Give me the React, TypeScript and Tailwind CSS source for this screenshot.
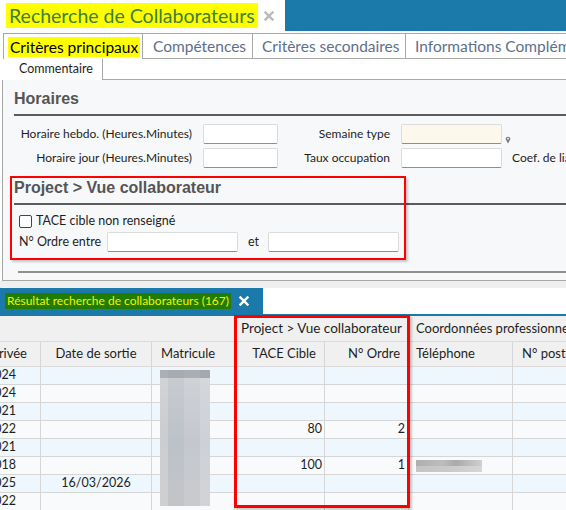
import React from "react";

const rows = [
  { arr: "01/09/2024", sortie: "", tace: "", ordre: "", tel: false },
  { arr: "04/11/2024", sortie: "", tace: "", ordre: "", tel: false },
  { arr: "06/04/2021", sortie: "", tace: "", ordre: "", tel: false },
  { arr: "02/05/2022", sortie: "", tace: "80", ordre: "2", tel: false },
  { arr: "01/02/2021", sortie: "", tace: "", ordre: "", tel: false },
  { arr: "03/09/2018", sortie: "", tace: "100", ordre: "1", tel: true },
  { arr: "06/01/2025", sortie: "16/03/2026", tace: "", ordre: "", tel: false },
  { arr: "07/03/2022", sortie: "", tace: "", ordre: "", tel: false },
];

function CloseIcon({ color, size }: { color: string; size: number }) {
  return (
    <svg width={size} height={size} viewBox="0 0 10 10">
      <path d="M1.5 1.5 L8.5 8.5 M8.5 1.5 L1.5 8.5" stroke={color} strokeWidth="2.4" strokeLinecap="square" />
    </svg>
  );
}

function Input({ w, cream }: { w: string; cream?: boolean }) {
  return (
    <div
      className={`${w} shrink-0 h-[20px] border border-[#dcdcdc] border-b-[#8e8e8e] rounded-[2px] ${
        cream ? "bg-[#fdf8ec]" : "bg-white"
      }`}
    />
  );
}

export default function App() {
  return (
    <div className="relative w-[566px] h-[510px] overflow-hidden bg-white font-['Segoe_UI',Lato,sans-serif] text-[#1e1e1e]">
      {/* Title bar */}
      <div className="flex h-[31px]">
        <div className="w-[285px] shrink-0 flex items-center pl-[6px]">
          <span className="bg-[#ffff00] text-[19.5px] leading-[25px] text-[#3d8033] px-[3px] whitespace-nowrap">
            Recherche de Collaborateurs
          </span>
          <span className="ml-[6px] mt-[1px]">
            <CloseIcon color="#b9b9b9" size={10} />
          </span>
        </div>
        <div className="flex-1 bg-[#1c7aab]" />
      </div>

      {/* Main tabs */}
      <div className="flex h-[28px] pt-[2px] pl-[3px] text-[15.5px] leading-[20px] whitespace-nowrap overflow-hidden">
        <div className="w-[140px] shrink-0 border-t border-l border-r border-[#a8a8a8] flex items-center pl-[4px]">
          <span className="bg-[#ffff00] text-black px-[2px]">Critères principaux</span>
        </div>
        <div className="w-[110px] shrink-0 border-t border-r border-b border-[#a8a8a8] flex items-center pl-[10px] text-[#5d6f8d]">
          Compétences
        </div>
        <div className="w-[153px] shrink-0 border-t border-r border-b border-[#a8a8a8] flex items-center pl-[9px] text-[#5d6f8d]">
          Critères secondaires
        </div>
        <div className="w-[200px] shrink-0 border-t border-b border-[#a8a8a8] flex items-center pl-[9px] text-[#5d6f8d]">
          Informations Complémentaires
        </div>
      </div>

      {/* Sub tabs */}
      <div className="flex h-[21px] pl-[3px]">
        <div className="w-[100px] shrink-0 border-r border-[#a8a8a8] flex items-center pl-[16px] text-[12.5px]">
          Commentaire
        </div>
        <div className="flex-1 border-b border-[#a8a8a8]" />
      </div>

      {/* Criteria panel */}
      <div className="ml-[2px] h-[201px] bg-[#f7f8fa] border-l border-b border-[#a8a8a8] pl-[11px] text-[12px] overflow-hidden">
        <div className="pt-[9px] pb-[5px] border-b-2 border-[#5b5b5b] font-['Liberation_Sans',Arial,sans-serif] font-bold text-[16px] leading-[20px] text-[#555]">
          Horaires
        </div>

        <div className="mt-[8px] flex items-center h-[20px] whitespace-nowrap">
          <div className="w-[178px] shrink-0 text-right">Horaire hebdo. (Heures.Minutes)</div>
          <div className="ml-[11px] shrink-0">
            <Input w="w-[75px]" />
          </div>
          <div className="w-[112px] shrink-0 text-right">Semaine type</div>
          <div className="ml-[11px] shrink-0">
            <Input w="w-[101px]" cream />
          </div>
          <svg className="ml-[3px] mt-[12px] shrink-0" width="6" height="8" viewBox="0 0 6 8">
            <path d="M3 7.5 L0.8 3.6 A2.3 2.3 0 1 1 5.2 3.6 Z" fill="#7a7a7a" />
            <circle cx="3" cy="2.7" r="0.9" fill="#f7f8fa" />
          </svg>
        </div>
        <div className="mt-[4px] flex items-center h-[20px] whitespace-nowrap">
          <div className="w-[178px] shrink-0 text-right">Horaire jour (Heures.Minutes)</div>
          <div className="ml-[11px] shrink-0">
            <Input w="w-[75px]" />
          </div>
          <div className="w-[112px] shrink-0 text-right">Taux occupation</div>
          <div className="ml-[11px] shrink-0">
            <Input w="w-[101px]" />
          </div>
          <div className="ml-[10px] shrink-0">Coef. de liaison</div>
        </div>

        <div className="mt-[10px] pb-[5px] border-b-2 border-[#5b5b5b] font-['Liberation_Sans',Arial,sans-serif] font-bold text-[16px] leading-[20px] text-[#555]">
          Project &gt; Vue collaborateur
        </div>

        <div className="mt-[6px] h-[20px] flex items-center pl-[5px] text-[12.5px]">
          <div className="w-[13px] h-[13px] border border-[#444] rounded-[2px] bg-white" />
          <span className="ml-[4px]">TACE cible non renseigné</span>
        </div>
        <div className="mt-[1px] h-[20px] flex items-center pl-[5px] whitespace-nowrap text-[12.5px]">
          <div className="w-[88px] shrink-0">N° Ordre entre</div>
          <Input w="w-[131px]" />
          <div className="ml-[10px] w-[20px] shrink-0">et</div>
          <Input w="w-[131px]" />
        </div>

        <div className="mt-[19px] ml-[4px] border-t-2 border-[#8f8f8f]" />
      </div>

      <div className="h-[7px] bg-[#efefef]" />

      {/* Result tab bar */}
      <div className="flex h-[28px] border-b-2 border-[#1c7aab]">
        <div className="w-[263px] shrink-0 bg-[#1c7aab] flex items-center pl-[5px]">
          <span className="bg-[#217c00] text-[#eef500] text-[12px] leading-[16px] px-[2px] whitespace-nowrap">
            Résultat recherche de collaborateurs (167)
          </span>
          <span className="ml-[8px]">
            <CloseIcon color="#ffffff" size={10} />
          </span>
        </div>
        <div className="flex-1 bg-white" />
      </div>

      {/* Grid */}
      <div className="text-[13px] whitespace-nowrap">
        <div className="flex h-[26px] bg-[#f0f0f0] border-b border-[#dadada]">
          <div className="w-[235px] shrink-0 border-r border-[#d6d6d6]" />
          <div className="w-[174px] shrink-0 border-r border-[#d6d6d6] flex items-center justify-center text-[13.5px]">
            Project &gt; Vue collaborateur
          </div>
          <div className="flex-1 overflow-hidden flex items-center pl-[7px]">Coordonnées professionnelles</div>
        </div>
        <div className="flex h-[25px] bg-[#f0f0f0] border-b border-[#dadada]">
          <div className="w-[41px] shrink-0 overflow-hidden border-r border-[#d6d6d6] flex items-center justify-end pr-[13px]">
            Date d'arrivée
          </div>
          <div className="w-[111px] shrink-0 border-r border-[#d6d6d6] flex items-center justify-center">
            Date de sortie
          </div>
          <div className="w-[83px] shrink-0 border-r border-[#d6d6d6] flex items-center pl-[9px]">Matricule</div>
          <div className="w-[90px] shrink-0 border-r border-[#d6d6d6] flex items-center justify-end pr-[8px]">
            TACE Cible
          </div>
          <div className="w-[84px] shrink-0 border-r border-[#d6d6d6] flex items-center justify-end pr-[8px]">
            N° Ordre
          </div>
          <div className="w-[104px] shrink-0 border-r border-[#d6d6d6] flex items-center pl-[7px]">Téléphone</div>
          <div className="flex-1 overflow-hidden flex items-center pl-[9px]">N° poste</div>
        </div>

        <div className="relative">
          {rows.map((r, i) => (
            <div
              key={i}
              className={`flex h-[18px] border-b border-[#d6d6d6] text-[12.5px] ${
                i % 2 === 0 ? "bg-[#eef6fe]" : "bg-[#f9fafb]"
              }`}
            >
              <div className="w-[41px] shrink-0 overflow-hidden border-r border-[#d6d6d6] flex items-center justify-end pr-[24px]">
                {r.arr}
              </div>
              <div className="w-[111px] shrink-0 border-r border-[#d6d6d6] flex items-center justify-center">
                {r.sortie}
              </div>
              <div className="w-[83px] shrink-0 border-r border-[#d6d6d6]" />
              <div className="w-[90px] shrink-0 border-r border-[#d6d6d6] flex items-center justify-end pr-[2px]">
                {r.tace}
              </div>
              <div className="w-[84px] shrink-0 border-r border-[#d6d6d6] flex items-center justify-end pr-[3px]">
                {r.ordre}
              </div>
              <div className="w-[104px] shrink-0 border-r border-[#d6d6d6] flex items-center pl-[7px]">
                {r.tel && (
                  <div className="w-[66px] h-[12px] flex flex-col">
                    <div className="h-[6px] bg-[linear-gradient(90deg,#aeaeae,#bdbdbd_40%,#aaaaaa_60%,#cfcfcf)]" />
                    <div className="h-[6px] bg-[linear-gradient(90deg,#c4c4c4,#cacaca_50%,#d6d6d6)]" />
                  </div>
                )}
              </div>
              <div className="flex-1" />
            </div>
          ))}

          {/* blurred matricule */}
          <div className="absolute left-[160px] top-[3px] w-[50px] h-[136px] flex">
            <div className="w-[8px] flex flex-col">
              <div className="h-[8px] bg-[#acafb3]" />
              <div className="flex-1 bg-[linear-gradient(180deg,#d2d3d6,#cbcdd1_40%,#d0cfd0)]" />
            </div>
            <div className="w-[16px] flex flex-col">
              <div className="h-[8px] bg-[#a6abb1]" />
              <div className="flex-1 bg-[linear-gradient(180deg,#c8cbd0,#bcc2c9_50%,#c3c4c7)]" />
            </div>
            <div className="w-[16px] flex flex-col">
              <div className="h-[8px] bg-[#a9aeb4]" />
              <div className="flex-1 bg-[linear-gradient(180deg,#cfd1d5,#c4c8ce_50%,#c9cacd)]" />
            </div>
            <div className="w-[10px] flex flex-col">
              <div className="h-[8px] bg-[#a5a9ae]" />
              <div className="flex-1 bg-[linear-gradient(180deg,#d4d7dc,#cdd1d7_50%,#d2d3d6)]" />
            </div>
          </div>
        </div>
      </div>

      {/* annotation boxes */}
      <div className="absolute left-[10px] top-[176px] w-[396px] h-[84px] border-2 border-[#ff0000] shadow-[2px_2px_2px_rgba(0,0,0,0.2)]" />
      <div className="absolute left-[234px] top-[315px] w-[176px] h-[193px] border-[3px] border-[#ff0000] shadow-[2px_2px_2px_rgba(0,0,0,0.2)]" />
    </div>
  );
}
